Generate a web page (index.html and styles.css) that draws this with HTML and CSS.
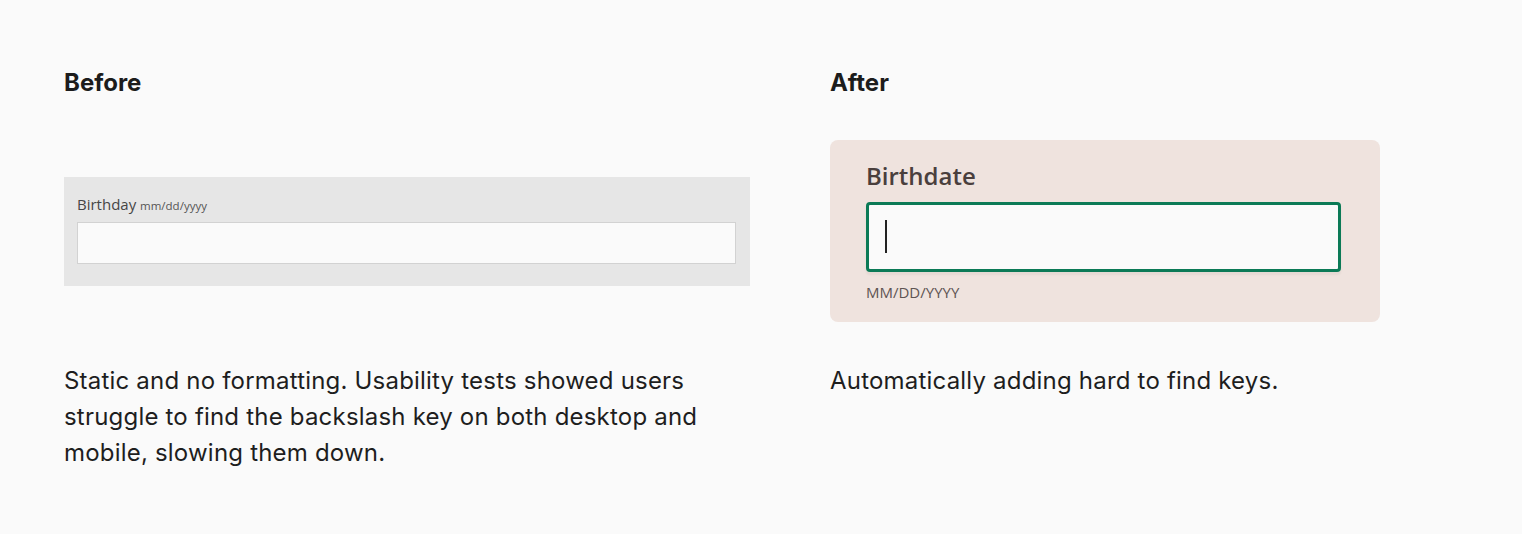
FILE: index.html
```html
<!DOCTYPE html>
<html lang="en">
<head>
<meta charset="utf-8">
<title>Before / After</title>
<link rel="stylesheet" href="styles.css">
</head>
<body>
<main class="compare">
  <h2 class="heading">Before</h2>
  <h2 class="heading">After</h2>

  <div class="figure">
    <div class="old-field">
      <div class="old-label">Birthday <span class="old-hint">mm/dd/yyyy</span></div>
      <div class="old-input"></div>
    </div>
  </div>
  <div class="figure">
    <div class="new-field">
      <div class="new-label">Birthdate</div>
      <div class="new-input"><span class="caret"></span></div>
      <div class="new-hint">MM/DD/YYYY</div>
    </div>
  </div>

  <p class="desc">Static and no formatting. Usability tests showed users struggle to find the backslash key on both desktop and mobile, slowing them down.</p>
  <p class="desc">Automatically adding hard to find keys.</p>
</main>
</body>
</html>
```

FILE: styles.css
```css
* { box-sizing: border-box; }

html, body {
  margin: 0;
  background: #fafafa;
}

body {
  font-family: Inter, "Noto Sans", sans-serif;
  color: #1e1e1e;
  padding: 68px 0 0 64px;
}

.compare {
  display: grid;
  grid-template-columns: 686px 550px;
  column-gap: 80px;
}

.heading {
  margin: 0;
  font-size: 24px;
  line-height: 30px;
  font-weight: 700;
  color: #1c1c1c;
}

.figure {
  margin-top: 42px;
  height: 182px;
  display: flex;
  align-items: center;
}

.old-field {
  width: 686px;
  background: #e6e6e6;
  padding: 17px 14px 22px 13px;
  font-family: "Open Sans", sans-serif;
}

.old-label {
  font-size: 15px;
  line-height: 20px;
  height: 20px;
  color: #464646;
}

.old-hint {
  font-size: 11.5px;
  line-height: 1;
  color: #555;
}

.old-input {
  margin-top: 8px;
  height: 42px;
  background: #fafafa;
  border: 1px solid #d2d2d2;
}

.new-field {
  width: 550px;
  background: #efe3de;
  border-radius: 8px;
  padding: 20px 39px 20px 36px;
  font-family: "Open Sans", sans-serif;
}

.new-label {
  font-size: 24px;
  line-height: 32px;
  font-weight: 600;
  color: #4a3f3d;
}

.new-input {
  margin-top: 10px;
  height: 70px;
  background: #fafafa;
  border: 3px solid #0b7a56;
  border-radius: 4px;
  padding: 15px 0 0 16px;
  box-shadow: 0 3px 2px rgba(120, 100, 95, 0.08);
}

.caret {
  display: block;
  width: 2px;
  height: 33px;
  background: #222;
}

.new-hint {
  margin-top: 10px;
  font-size: 15px;
  line-height: 20px;
  color: #5e5453;
}

.desc {
  margin: 41px 0 0;
  font-size: 24px;
  line-height: 36px;
  letter-spacing: 0.2px;
  color: #1e1e1e;
}
```
